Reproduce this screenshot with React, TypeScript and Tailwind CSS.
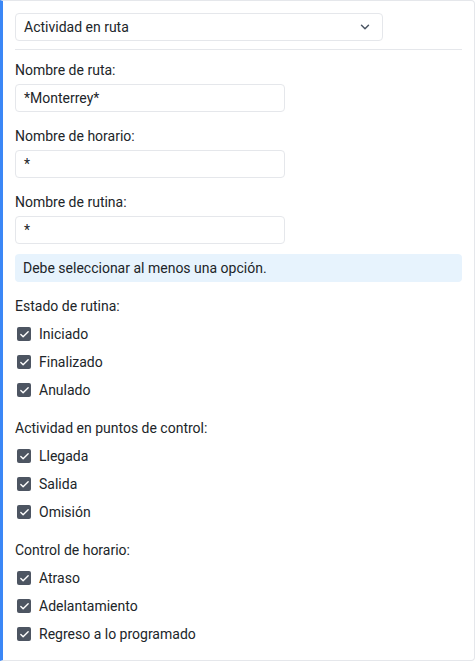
// Route activity filter panel — a bordered card with a blue accent edge,
// a type select, three text filters, a hint and three checkbox groups.

import { ChevronDown, Check } from 'lucide-react'

const GROUPS: { title: string; items: string[] }[] = [
  { title: 'Estado de rutina:', items: ['Iniciado', 'Finalizado', 'Anulado'] },
  { title: 'Actividad en puntos de control:', items: ['Llegada', 'Salida', 'Omisión'] },
  { title: 'Control de horario:', items: ['Atraso', 'Adelantamiento', 'Regreso a lo programado'] },
]

const FIELDS: { label: string; value: string }[] = [
  { label: 'Nombre de ruta:', value: '*Monterrey*' },
  { label: 'Nombre de horario:', value: '*' },
  { label: 'Nombre de rutina:', value: '*' },
]

function CheckRow({ label }: { label: string }) {
  return (
    <label className="flex h-7 items-center gap-2 pl-0.5">
      <span className="flex h-3.5 w-3.5 items-center justify-center rounded-[2px] bg-[#4d5562] text-white">
        <Check size={11} strokeWidth={3} />
      </span>
      <span>{label}</span>
    </label>
  )
}

export default function App() {
  return (
    <div className="bg-white font-['Roboto','Liberation_Sans',sans-serif] text-[14px] leading-5 text-[#212529]">
      <div className="h-[661px] rounded-r border border-gray-200 border-l-[3px] border-l-[#3b87f6] px-3 pt-3 pb-3">
        <div className="flex h-7 w-[368px] items-center justify-between rounded border border-gray-200 pl-2 pr-2.5">
          <span>Actividad en ruta</span>
          <ChevronDown size={14} strokeWidth={2.5} className="text-[#4b5563]" />
        </div>
        <div className="mt-2 border-t border-gray-200" />

        <div className="mt-2.5">
          {FIELDS.map((f, i) => (
            <div key={f.label} className={i > 0 ? 'mt-3.5' : ''}>
              <div className="mb-1">{f.label}</div>
              <div className="flex h-7 w-[270px] items-center rounded border border-gray-200 px-2">{f.value}</div>
            </div>
          ))}
        </div>

        <div className="mt-2.5 flex h-7 items-center rounded bg-[#e7f3fd] px-2">
          Debe seleccionar al menos una opción.
        </div>

        {GROUPS.map((g) => (
          <div key={g.title} className="mt-3.5">
            <div>{g.title}</div>
            <div className="mt-1">
              {g.items.map((it) => (
                <CheckRow key={it} label={it} />
              ))}
            </div>
          </div>
        ))}
      </div>
    </div>
  )
}
